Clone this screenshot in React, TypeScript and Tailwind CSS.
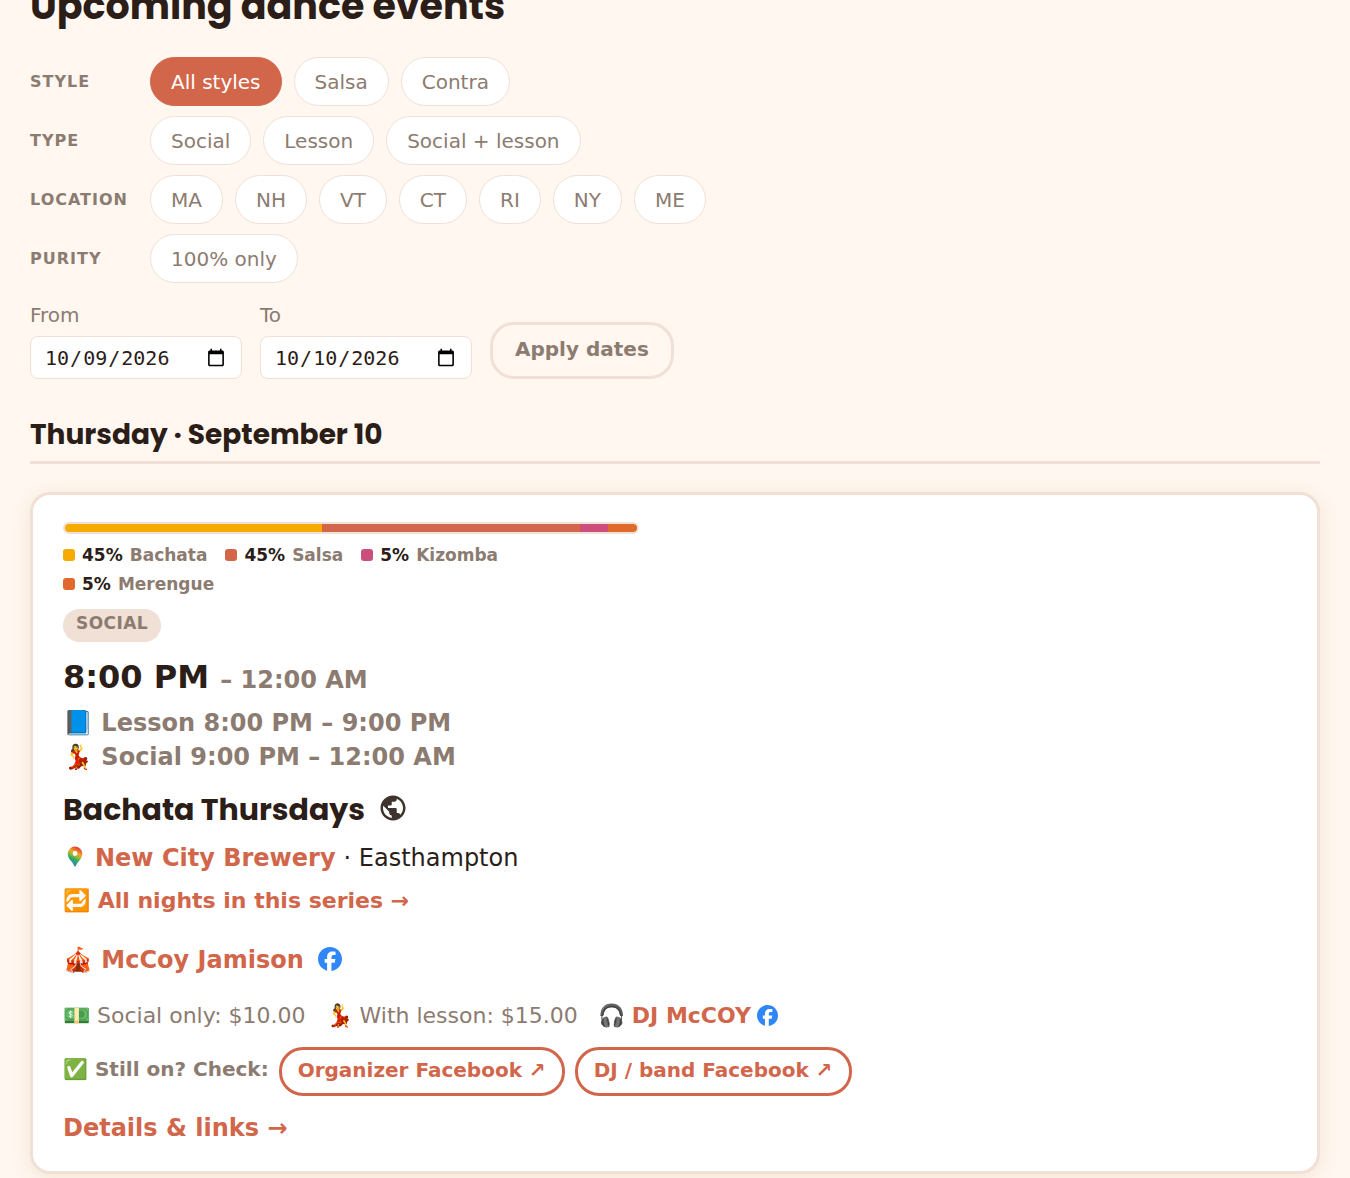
import {useId, useState} from "react";
import type {ReactNode} from "react";
import clsx from "clsx";
import {MdPublic} from "react-icons/md";
import {SiFacebook} from "react-icons/si";

const filters = [
    {label: "Style", options: ["All styles", "Salsa", "Contra"]},
    {label: "Type", options: ["Social", "Lesson", "Social + lesson"]},
    {label: "Location", options: ["MA", "NH", "VT", "CT", "RI", "NY", "ME"]},
    {label: "Purity", options: ["100% only"]},
];

const mix = [
    {name: "Bachata", percent: 45, color: "bg-[#f5ab00]"},
    {name: "Salsa", percent: 45, color: "bg-[#d1664a]"},
    {name: "Kizomba", percent: 5, color: "bg-[#cb4e7d]"},
    {name: "Merengue", percent: 5, color: "bg-[#e0692e]"},
];

const FilterRow = ({label, options, selected, onSelect}: {
    label: string;
    options: string[];
    selected?: string;
    onSelect: (option: string) => void;
}) => (
    <div className="flex items-center" role="group" aria-label={label}>
        <span className="w-[120px] shrink-0 text-[16px] leading-5 font-bold uppercase tracking-[1px] text-[#8c7b70]">
            {label}
        </span>
        <div className="flex flex-wrap gap-x-3 gap-y-2.5">
            {options.map(option => (
                <button
                    key={option}
                    type="button"
                    aria-pressed={selected === option}
                    onClick={() => onSelect(option)}
                    className={clsx(
                        "h-[49px] rounded-full border px-5 text-[20px]",
                        selected === option
                            ? "border-[#d1664a] bg-[#d1664a] text-white"
                            : "border-[#f0e0d6] bg-white text-[#8c7b70]"
                    )}
                >
                    {option}
                </button>
            ))}
        </div>
    </div>
);

const DateField = ({label, value, onChange}: {label: string; value: string; onChange: (value: string) => void}) => {
    const id = useId();

    return (
        <div className="flex flex-col gap-[9px]">
            <label htmlFor={id} className="text-[20px] leading-6 text-[#8c7b70]">{label}</label>
            <input
                id={id}
                type="date"
                value={value}
                onChange={e => onChange(e.target.value)}
                className="h-[43px] w-[212px] rounded-lg border border-[#f0e0d6] bg-white px-[13px] font-['DejaVu_Sans_Mono',monospace] text-[20px]"
            />
        </div>
    );
};

const CheckLink = ({children}: {children: ReactNode}) => (
    <a href="#" className="flex h-[49px] items-center rounded-3xl border-3 border-[#d1664a] px-4 pb-1 text-[20px] text-[#d1664a]">
        {children}
    </a>
);

const MapPin = () => (
    <svg viewBox="0 0 16 21" className="h-[21px] w-4" aria-hidden="true">
        <defs>
            <linearGradient id="pin" x1="0.7" y1="0" x2="0.3" y2="1">
                <stop offset="0.08" stopColor="#e2453a"/>
                <stop offset="0.32" stopColor="#f5a623"/>
                <stop offset="0.5" stopColor="#8cba3c"/>
                <stop offset="0.65" stopColor="#2fa866"/>
                <stop offset="1" stopColor="#3580d8"/>
            </linearGradient>
        </defs>
        <path d="M8 .5A7.300 7.300 0 0 0 .7 7.800c0 3 1.600 5.200 3.300 7.300 1.500 1.900 2.500 3.200 3.200 4.800.3.700 1.300.7 1.600 0 .7-1.600 1.700-2.900 3.200-4.800 1.700-2.100 3.300-4.300 3.300-7.300A7.300 7.300 0 0 0 8 .5z" fill="url(#pin)"/>
        <circle cx="8" cy="7.500" r="2.400" fill="white"/>
    </svg>
);

const EventCard = () => (
    <article className="rounded-[20px] border-3 border-[#f0e0d6] bg-white px-[30px] pt-[27px] pb-[26px] shadow-[0_4px_20px_rgba(176,128,48,0.14)]">
        <div className="max-w-[576px]">
            <div className="flex h-3 overflow-hidden rounded-full border-2 border-[#f0e0d6]">
                {mix.map(({name, percent, color}) => (
                    <div key={name} className={color} style={{width: `${percent}%`}}/>
                ))}
            </div>
            <ul className="mt-[11px] flex flex-wrap gap-x-[18px] gap-y-[9px] text-[17px] leading-5 font-bold">
                {mix.map(({name, percent, color}) => (
                    <li key={name} className="flex items-center gap-[7px]">
                        <span className={clsx("size-3 rounded-[3px]", color)}/>
                        <span>{percent}%</span>
                        <span className="text-[#8c7b70]">{name}</span>
                    </li>
                ))}
            </ul>
        </div>
        <span className="mt-[15px] flex h-[33px] w-fit items-center rounded-full bg-[#f0e0d6] px-[13px] pb-[3px] text-[17px] font-bold uppercase tracking-wide text-[#8c7b70]">
            Social
        </span>
        <p className="mt-[15px] text-[32px] leading-10 font-bold">
            8:00 PM <span className="text-[24px] text-[#8c7b70]">– 12:00 AM</span>
        </p>
        <div className="mt-1.5 text-[24px] leading-[34px] font-bold text-[#8c7b70]">
            <p>📘 Lesson 8:00 PM – 9:00 PM</p>
            <p>💃 Social 9:00 PM – 12:00 AM</p>
        </div>
        <div className="mt-4 flex items-center gap-[13px]">
            <h3 className="font-['Poppins','Inter',sans-serif] text-[30px] leading-10 font-bold">Bachata Thursdays</h3>
            <a href="#" aria-label="Event website" className="pb-1 opacity-90"><MdPublic className="size-[30px]"/></a>
        </div>
        <p className="mt-[11px] flex items-center text-[24px] leading-[34px]">
            <span className="mr-2 flex w-6 justify-center pb-1"><MapPin/></span>
            <a href="#" className="font-bold text-[#d1664a]">New City Brewery</a>
            <span className="ml-2">· Easthampton</span>
        </p>
        <p className="mt-2.5 text-[22px] leading-8 font-bold">
            <a href="#" className="text-[#d1664a]">🔁 All nights in this series →</a>
        </p>
        <p className="mt-[26px] flex items-center gap-3.5 text-[24px] leading-[34px] font-bold">
            <a href="#" className="text-[#d1664a]">🎪 McCoy Jamison</a>
            <a href="#" aria-label="McCoy Jamison on Facebook" className="pb-0.5"><SiFacebook className="size-6 text-[#2e86f7]"/></a>
        </p>
        <div className="mt-[23px] flex flex-wrap gap-x-5 text-[22px] leading-8 text-[#8c7b70]">
            <span>💵 Social only: $10.00</span>
            <span>💃 With lesson: $15.00</span>
            <span className="flex items-center gap-1.5">
                <span>🎧 <a href="#" className="font-bold text-[#d1664a]">DJ McCOY</a></span>
                <a href="#" aria-label="DJ McCOY on Facebook" className="pb-0.5"><SiFacebook className="size-[21px] text-[#2e86f7]"/></a>
            </span>
        </div>
        <div className="mt-[15px] flex flex-wrap items-center gap-2.5 font-bold">
            <span className="pb-1.5 text-[20px] text-[#8c7b70]">✅ Still on? Check:</span>
            <CheckLink>Organizer Facebook ↗</CheckLink>
            <CheckLink>DJ / band Facebook ↗</CheckLink>
        </div>
        <p className="mt-[15px] text-[24px] leading-[34px] font-bold">
            <a href="#" className="text-[#d1664a]">Details &amp; links →</a>
        </p>
    </article>
);

const App = () => {
    const [selected, setSelected] = useState<Record<string, string>>({Style: "All styles"});
    const [from, setFrom] = useState("2026-10-09");
    const [to, setTo] = useState("2026-10-10");

    return (
        <div className="flow-root min-h-screen bg-[#fff7f0] font-['DejaVu_Sans',sans-serif] text-[#2b1d18]">
            <main className="mx-[30px] pb-1">
                <h1 className="-mt-4 font-['Poppins','Inter',sans-serif] text-[38px] leading-[44px] font-bold">
                    Upcoming dance events
                </h1>
                <div className="mt-[29px] flex flex-col gap-2.5">
                    {filters.map(({label, options}) => (
                        <FilterRow
                            key={label}
                            label={label}
                            options={options}
                            selected={selected[label]}
                            onSelect={option => setSelected({...selected, [label]: option})}
                        />
                    ))}
                </div>
                <form className="mt-5 flex flex-wrap items-end gap-[18px]" onSubmit={e => e.preventDefault()}>
                    <DateField label="From" value={from} onChange={setFrom}/>
                    <DateField label="To" value={to} onChange={setTo}/>
                    <button
                        type="submit"
                        className="h-[57px] rounded-3xl border-3 border-[#f0e0d6] px-[22px] pb-1 text-[20px] font-bold text-[#8c7b70]"
                    >
                        Apply dates
                    </button>
                </form>
                <section className="mt-[35px]">
                    <h2 className="border-b-3 border-[#f0e0d6] pb-[5px] font-['Poppins','Inter',sans-serif] text-[28px] leading-[42px] font-bold">
                        Thursday · September 10
                    </h2>
                    <div className="mt-7">
                        <EventCard/>
                    </div>
                </section>
            </main>
        </div>
    );
};

export default App;
